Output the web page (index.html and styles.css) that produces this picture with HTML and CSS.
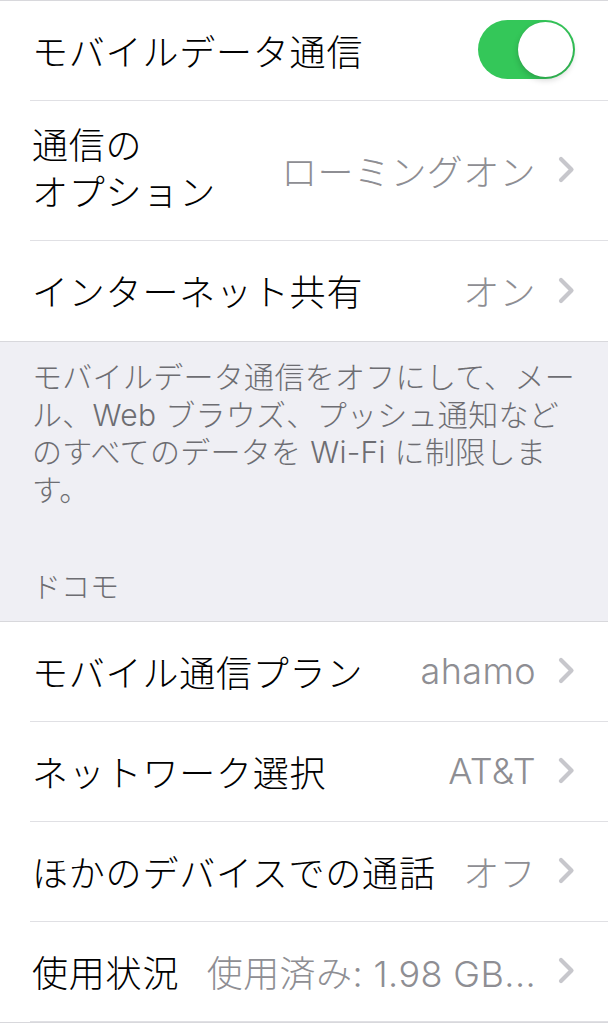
FILE: index.html
```html
<!DOCTYPE html>
<html>
  <head>
    <meta charset="utf-8">
    <meta name="viewport" content="width=device-width, initial-scale=1">
    <title>モバイル通信</title>
    <link rel="stylesheet" href="styles.css">
  </head>
  <body>
    <div class="settings">
      <div class="group">
        <div class="row">
          <span class="label">モバイルデータ通信</span>
          <span class="switch on"><span class="knob"></span></span>
        </div>
        <div class="row tall">
          <span class="label multi">通信の<br>オプション</span>
          <span class="value">ローミングオン</span>
          <svg class="chevron" viewBox="0 0 17 27"><path d="M3 3 L13.5 13.5 L3 24"/></svg>
        </div>
        <div class="row">
          <span class="label">インターネット共有</span>
          <span class="value">オン</span>
          <svg class="chevron" viewBox="0 0 17 27"><path d="M3 3 L13.5 13.5 L3 24"/></svg>
        </div>
      </div>

      <div class="group-footer">
        モバイルデータ通信をオフにして、メー<br>ル、Web ブラウズ、プッシュ通知など<br>のすべてのデータを Wi-Fi に制限しま<br>す。
      </div>
      <div class="group-header">ドコモ</div>

      <div class="group">
        <div class="row">
          <span class="label">モバイル通信プラン</span>
          <span class="value">ahamo</span>
          <svg class="chevron" viewBox="0 0 17 27"><path d="M3 3 L13.5 13.5 L3 24"/></svg>
        </div>
        <div class="row">
          <span class="label">ネットワーク選択</span>
          <span class="value">AT&amp;T</span>
          <svg class="chevron" viewBox="0 0 17 27"><path d="M3 3 L13.5 13.5 L3 24"/></svg>
        </div>
        <div class="row">
          <span class="label">ほかのデバイスでの通話</span>
          <span class="value">オフ</span>
          <svg class="chevron" viewBox="0 0 17 27"><path d="M3 3 L13.5 13.5 L3 24"/></svg>
        </div>
        <div class="row">
          <span class="label">使用状況</span>
          <span class="value">使用済み: 1.98 GB...</span>
          <svg class="chevron" viewBox="0 0 17 27"><path d="M3 3 L13.5 13.5 L3 24"/></svg>
        </div>
      </div>
    </div>
  </body>
</html>
```

FILE: styles.css
```css
body, html { margin: 0; padding: 0; background: #fff; font-family: Inter, "Noto Sans CJK JP", sans-serif; font-weight: 300; }
.settings { background: #efeff4; }

.group { background: #fff; border-top: 1px solid #d8d8dc; border-bottom: 1px solid #d8d8dc; padding-left: 30px; }
.row { box-sizing: border-box; display: flex; align-items: center; height: 100px; padding: 0 33px 2px 2px; border-bottom: 1px solid #e0e0e4; }
.group:first-child .row:last-child { border-bottom: none; }
.row.tall { height: 140px; }

.label { flex-shrink: 0; font-size: 36px; letter-spacing: 0.8px; color: #000; white-space: nowrap; }
.label.multi { line-height: 47px; }
.value { flex-shrink: 0; margin-left: auto; padding-left: 14px; font-size: 36px; letter-spacing: 0.4px; color: #8e8e93; white-space: nowrap; }
.chevron { flex-shrink: 0; width: 17px; height: 27px; margin-left: 22px; fill: none; stroke: #c7c7cc; stroke-width: 4.2; stroke-linecap: round; stroke-linejoin: round; }

.switch { margin-left: auto; position: relative; width: 97px; height: 59px; border-radius: 30px; background: #34c759; }
.switch .knob { position: absolute; top: 2px; right: 2px; width: 55px; height: 55px; border-radius: 50%; background: #fff; box-shadow: 0 3px 6px rgba(0,0,0,0.18), 0 0 1px rgba(0,0,0,0.15); }

.group-footer { padding: 17px 32px 0; font-size: 30px; line-height: 37.5px; color: #6d6d72; letter-spacing: 0.3px; }
.group-header { padding: 60px 32px 15px; font-size: 29px; line-height: 37px; color: #6d6d72; }
```
